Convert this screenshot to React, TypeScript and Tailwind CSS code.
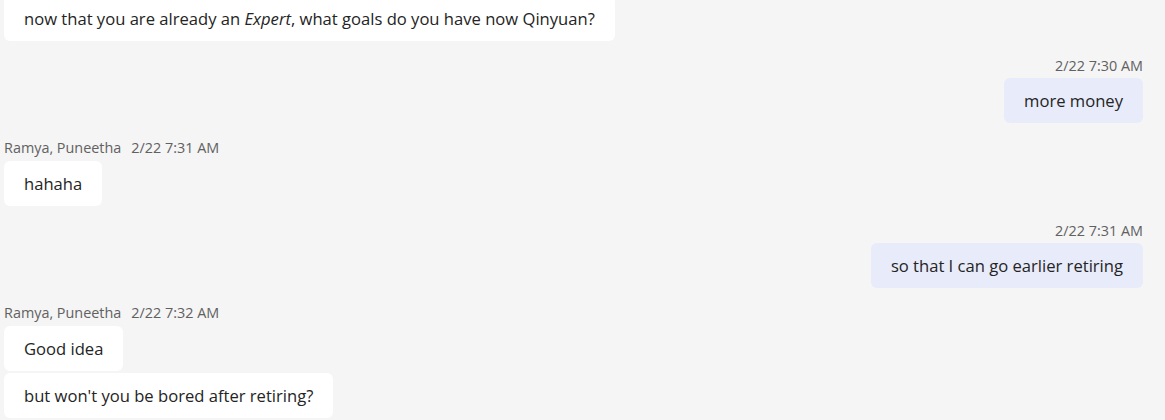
const font = { fontFamily: '"Open Sans", "Noto Sans", sans-serif' }

function Meta({ name, time, mine }: { name?: string; time: string; mine?: boolean }) {
  return (
    <div
      className={`flex h-5 items-center gap-[10px] text-[14.4px] text-[#616161] ${mine ? 'justify-end' : ''}`}
    >
      {name && <span>{name}</span>}
      <span>{time}</span>
    </div>
  )
}

function Bubble({ children, mine }: { children: React.ReactNode; mine?: boolean }) {
  return (
    <div
      className={`w-fit rounded-md px-5 py-[11px] text-[16.6px] leading-[23px] text-[#242424] ${
        mine ? 'self-end bg-[#e8ebfa]' : 'bg-white'
      }`}
    >
      {children}
    </div>
  )
}

export default function App() {
  return (
    <div className="h-[420px] w-[1165px] overflow-hidden bg-[#f5f5f5]" style={font}>
      <div className="flex flex-col pl-[4px] pr-[22px]">
        <div className="-mt-[4px]">
          <Bubble>
            now that you are already an <i>Expert</i>, what goals do you have now Qinyuan?
          </Bubble>
        </div>

        <div className="mt-[15px] flex flex-col gap-[2px]">
          <Meta time="2/22 7:30 AM" mine />
          <Bubble mine>more money</Bubble>
        </div>

        <div className="mt-[15px] flex flex-col gap-[3px]">
          <Meta name="Ramya, Puneetha" time="2/22 7:31 AM" />
          <Bubble>hahaha</Bubble>
        </div>

        <div className="mt-[15px] flex flex-col gap-[2px]">
          <Meta time="2/22 7:31 AM" mine />
          <Bubble mine>so that I can go earlier retiring</Bubble>
        </div>

        <div className="mt-[15px] flex flex-col gap-[2px]">
          <div className="mb-px">
            <Meta name="Ramya, Puneetha" time="2/22 7:32 AM" />
          </div>
          <Bubble>Good idea</Bubble>
          <Bubble>but won't you be bored after retiring?</Bubble>
        </div>
      </div>
    </div>
  )
}
